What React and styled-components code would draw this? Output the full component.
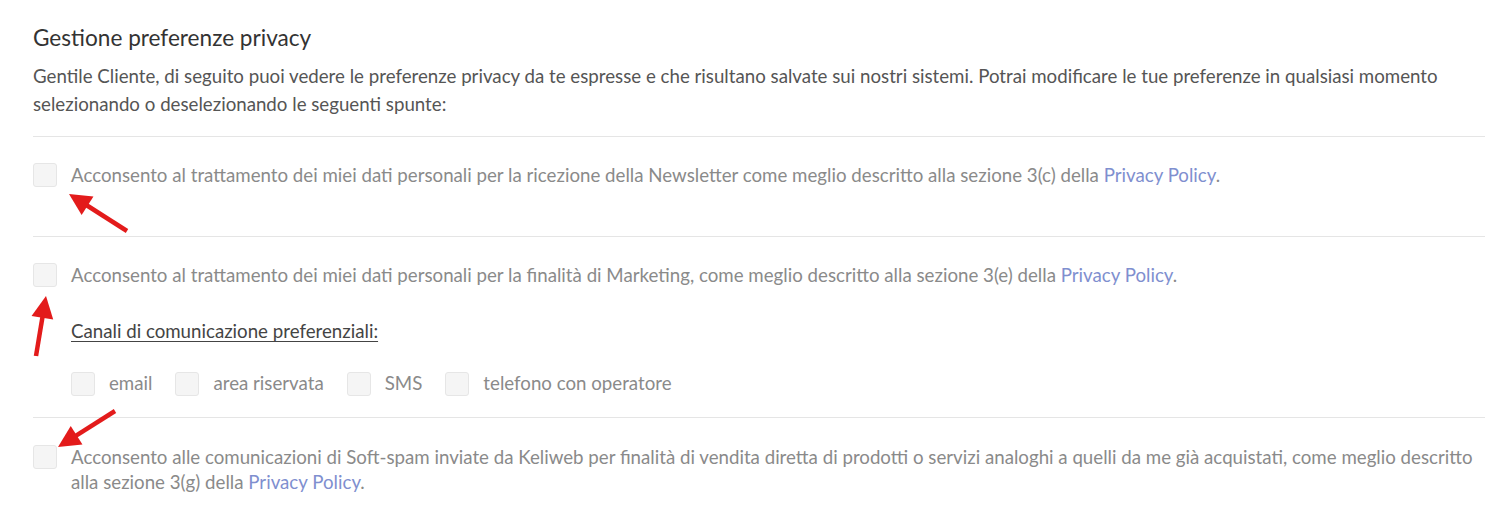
import React from 'react';
import styled, { createGlobalStyle } from 'styled-components';

const GlobalStyle = createGlobalStyle`
  body {
    margin: 0;
    background: #fff;
    font-family: Lato, "Open Sans", sans-serif;
  }
`;

const Page = styled.div`
  position: relative;
  padding: 24px 8px 0 33px;
`;

const Title = styled.h2`
  margin: 0;
  font-size: 22.6px;
  font-weight: 400;
  line-height: 28px;
  color: #333;
`;

const Intro = styled.p`
  margin: 10px 0 18px;
  font-size: 18.7px;
  line-height: 28px;
  color: #555;
`;

const Section = styled.div`
  border-top: 1px solid #e5e5e5;
  padding: ${props => props.pad || '26px 0 48px'};
`;

const Row = styled.label`
  display: flex;
  align-items: flex-start;
  gap: 14px;
`;

const Box = styled.span`
  flex: 0 0 auto;
  width: 22px;
  height: 22px;
  border: 1px solid #e6e6e6;
  border-radius: 3px;
  background: #f5f5f5;
`;

const Label = styled.span`
  font-size: 18.7px;
  line-height: 25px;
  color: #8a8a8a;
`;

const Link = styled.a`
  color: #7f8fcf;
  text-decoration: none;
`;

const Channels = styled.div`
  margin: 31px 0 0 38px;
`;

const ChannelsTitle = styled.div`
  font-size: 18.7px;
  line-height: 25px;
  color: #444;
  text-decoration: underline;
  text-underline-offset: 3px;
`;

const Options = styled.div`
  display: flex;
  gap: 23px;
  margin-top: 27px;
`;

const Option = styled.label`
  display: flex;
  align-items: center;
  gap: 14px;
`;

const Overlay = styled.svg`
  position: absolute;
  left: 0;
  top: 0;
  pointer-events: none;
`;

function Arrow({ x1, y1, x2, y2 }) {
  const dx = x2 - x1;
  const dy = y2 - y1;
  const len = Math.hypot(dx, dy);
  const ux = dx / len;
  const uy = dy / len;
  const hl = 22;
  const hw = 11;
  const bx = x2 - ux * hl;
  const by = y2 - uy * hl;
  const pts = `${x2},${y2} ${bx - uy * hw},${by + ux * hw} ${bx + uy * hw},${by - ux * hw}`;
  return (
    <g>
      <line x1={x1} y1={y1} x2={bx + ux * 2} y2={by + uy * 2} stroke="#e31b1b" strokeWidth="4.5" />
      <polygon points={pts} fill="#e31b1b" />
    </g>
  );
}

function Consent({ children }) {
  return (
    <Row>
      <Box />
      <Label>{children}</Label>
    </Row>
  );
}

export default function App() {
  return (
    <>
      <GlobalStyle />
      <Page>
        <Title>Gestione preferenze privacy</Title>
        <Intro>
          Gentile Cliente, di seguito puoi vedere le preferenze privacy da te espresse e che risultano salvate sui nostri sistemi. Potrai modificare le tue preferenze in qualsiasi momento selezionando o deselezionando le seguenti spunte:
        </Intro>
        <Section>
          <Consent>
            Acconsento al trattamento dei miei dati personali per la ricezione della Newsletter come meglio descritto alla sezione 3(c) della <Link>Privacy Policy</Link>.
          </Consent>
        </Section>
        <Section pad="26px 0 21px">
          <Consent>
            Acconsento al trattamento dei miei dati personali per la finalità di Marketing, come meglio descritto alla sezione 3(e) della <Link>Privacy Policy</Link>.
          </Consent>
          <Channels>
            <ChannelsTitle>Canali di comunicazione preferenziali:</ChannelsTitle>
            <Options>
              {['email', 'area riservata', 'SMS', 'telefono con operatore'].map(o => (
                <Option key={o}>
                  <Box />
                  <Label>{o}</Label>
                </Option>
              ))}
            </Options>
          </Channels>
        </Section>
        <Section pad="27px 0 20px">
          <Consent>
            Acconsento alle comunicazioni di Soft-spam inviate da Keliweb per finalità di vendita diretta di prodotti o servizi analoghi a quelli da me già acquistati, come meglio descritto alla sezione 3(g) della <Link>Privacy Policy</Link>.
          </Consent>
        </Section>
        <Overlay width="1493" height="522">
          <Arrow x1={127} y1={231} x2={69} y2={194} />
          <Arrow x1={36} y1={356} x2={46} y2={296} />
          <Arrow x1={115} y1={411} x2={58} y2={447} />
        </Overlay>
      </Page>
    </>
  );
}
